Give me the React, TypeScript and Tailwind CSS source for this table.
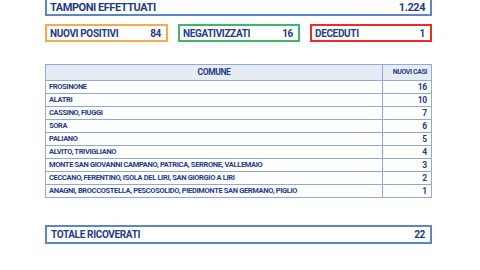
const rows: [string, number][] = [
    ["FROSINONE", 16],
    ["ALATRI", 10],
    ["CASSINO, FIUGGI", 7],
    ["SORA", 6],
    ["PALIANO", 5],
    ["ALVITO, TRIVIGLIANO", 4],
    ["MONTE SAN GIOVANNI CAMPANO, PATRICA, SERRONE, VALLEMAIO", 3],
    ["CECCANO, FERENTINO, ISOLA DEL LIRI, SAN GIORGIO A LIRI", 2],
    ["ANAGNI, BROCCOSTELLA, PESCOSOLIDO, PIEDIMONTE SAN GERMANO, PIGLIO", 1],
];

function StatBox({ label, value, border, width }: { label: string; value: string; border: string; width: string }) {
    return (
        <div className={`${width} ${border} h-[18px] border-2 flex items-center justify-between pl-[3px] pr-[5px] text-[10px] tracking-[-0.35px]`}>
            <span>{label}</span>
            <span>{value}</span>
        </div>
    );
}

export default function App() {
    return (
        <div className="w-[480px] h-[270px] bg-white overflow-hidden font-['Roboto',sans-serif] font-bold text-[#1f3c88]">
            <div className="ml-[45px] w-[387px]">
                <div className="-mt-[4px] h-[20px] border-2 border-[#5b87c7] flex items-center justify-between pl-[3px] pr-[5px] pt-[4px] text-[11px] tracking-[-0.45px]">
                    <span>TAMPONI EFFETTUATI</span>
                    <span>1.224</span>
                </div>

                <div className="mt-[8px] flex gap-[10px]">
                    <StatBox label="NUOVI POSITIVI" value="84" border="border-[#f7a94e]" width="w-[123px]"/>
                    <StatBox label="NEGATIVIZZATI" value="16" border="border-[#3db86b]" width="w-[122px]"/>
                    <StatBox label="DECEDUTI" value="1" border="border-[#ee2b2b]" width="w-[122px]"/>
                </div>

                <table className="mt-[22px] w-full border-collapse">
                    <thead>
                        <tr className="h-[16px] bg-[#e7ecf4]">
                            <th className="border border-[#8eaadb] text-center font-bold text-[8.5px] tracking-[-0.4px]">COMUNE</th>
                            <th className="w-[49px] border border-[#8eaadb] text-right pr-[4px] text-[7px] tracking-[-0.4px] font-bold">NUOVI CASI</th>
                        </tr>
                    </thead>
                    <tbody>
                        {rows.map(([name, n]) => (
                            <tr key={name} className="h-[13px]">
                                <td className="border border-[#8eaadb] pl-[3px] leading-none whitespace-nowrap font-['Liberation_Sans_Narrow','Roboto',sans-serif] text-[7.5px] tracking-[-0.35px]">{name}</td>
                                <td className="border border-[#8eaadb] text-right pr-[4px] text-[8.5px] tracking-[-0.2px] leading-none">{n}</td>
                            </tr>
                        ))}
                    </tbody>
                </table>

                <div className="mt-[27px] h-[19px] border-2 border-[#5b87c7] flex items-center justify-between pl-[4px] pr-[5px] text-[10px] tracking-[-0.35px]">
                    <span>TOTALE RICOVERATI</span>
                    <span>22</span>
                </div>
            </div>
        </div>
    );
}
